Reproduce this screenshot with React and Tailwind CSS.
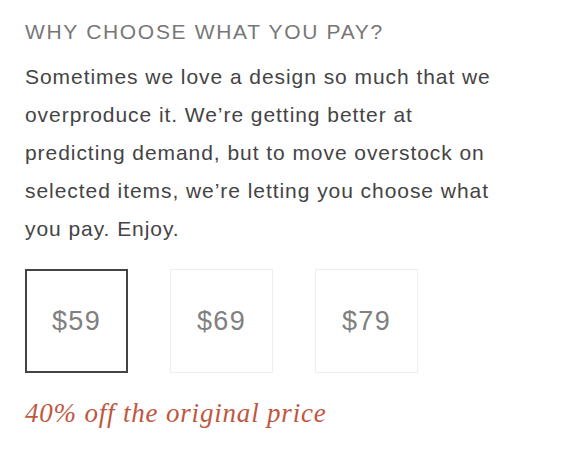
export default function App() {
  const prices = [59, 69, 79];
  const selected = 59;

  return (
    <div className="min-h-screen bg-white px-[25px] pt-[19px] font-['Liberation_Sans',Arial,sans-serif]">
      <h3 className="text-[21px] leading-[26px] tracking-[0.08em] text-[#777] uppercase">
        Why choose what you pay?
      </h3>
      <p className="mt-[13px] text-[21px] leading-[38px] tracking-[0.045em] text-[#444]">
        Sometimes we love a design so much that we
        <br />
        overproduce it. We’re getting better at
        <br />
        predicting demand, but to move overstock on
        <br />
        selected items, we’re letting you choose what
        <br />
        you pay. Enjoy.
      </p>

      <div className="mt-[21px] flex gap-[42px]">
        {prices.map((p) => (
          <button
            key={p}
            className={`flex h-[104px] w-[103px] items-center justify-center text-[27px] tracking-[0.05em] text-[#808080] ${
              p === selected ? 'border-2 border-[#444]' : 'border border-[#eee]'
            }`}
          >
            ${p}
          </button>
        ))}
      </div>

      <p className="mt-[24px] font-['Liberation_Serif',Georgia,serif] text-[27px] leading-[32px] tracking-[0.03em] italic text-[#c0573f]">
        40% off the original price
      </p>
    </div>
  );
}
